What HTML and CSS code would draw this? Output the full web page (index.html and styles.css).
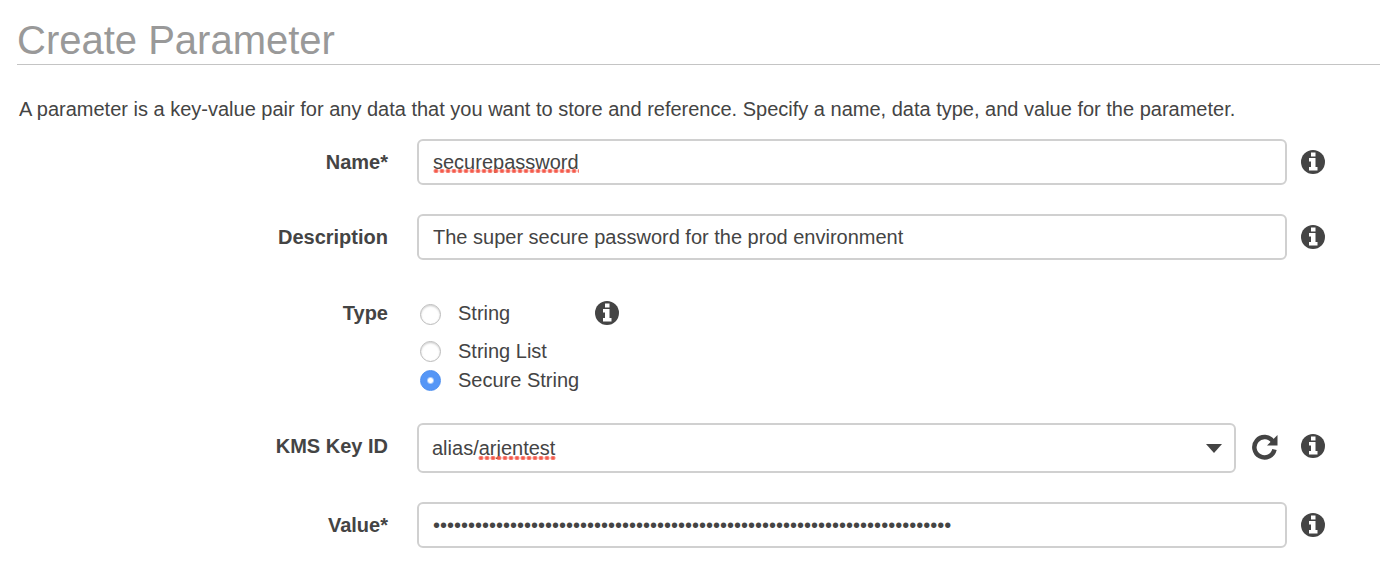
FILE: index.html
```html
<!DOCTYPE html>
<html lang="en">
<head>
<meta charset="utf-8">
<title>Create Parameter</title>
<link rel="stylesheet" href="styles.css">
</head>
<body>
<svg class="sprite" aria-hidden="true">
  <symbol id="info" viewBox="0 0 24 24">
    <circle cx="12" cy="12" r="12" fill="#444"/>
    <path fill="#fff" d="M10 2.500h4.500v4H10zM8 8h6.500v9H16.500v3.500H8V17h2v-5.500H8z"/>
  </symbol>
</svg>
<main class="page">
  <h1 class="title">Create Parameter</h1>
  <p class="intro">A parameter is a key-value pair for any data that you want to store and reference. Specify a name, data type, and value for the parameter.</p>
  <form class="form">
    <div class="row">
      <label class="label" for="name">Name*</label>
      <div class="control">
        <input class="field" id="name" type="text" value="securepassword" spellcheck="false">
        <span class="misspelt misspelt-name"></span>
      </div>
      <button class="icon-button" type="button" aria-label="About name"><svg class="icon"><use href="#info"/></svg></button>
    </div>
    <div class="row">
      <label class="label" for="description">Description</label>
      <div class="control">
        <input class="field" id="description" type="text" value="The super secure password for the prod environment" spellcheck="false">
      </div>
      <button class="icon-button" type="button" aria-label="About description"><svg class="icon"><use href="#info"/></svg></button>
    </div>
    <div class="row row-type" role="radiogroup" aria-labelledby="type-label">
      <span class="label" id="type-label">Type</span>
      <div class="options">
        <div class="option option-first">
          <label class="choice"><input class="radio" type="radio" name="type">String</label>
          <button class="icon-button" type="button" aria-label="About type"><svg class="icon"><use href="#info"/></svg></button>
        </div>
        <div class="option"><label class="choice"><input class="radio" type="radio" name="type">String List</label></div>
        <div class="option"><label class="choice"><input class="radio" type="radio" name="type" checked>Secure String</label></div>
      </div>
    </div>
    <div class="row row-key">
      <label class="label" for="key">KMS Key ID</label>
      <div class="key">
        <div class="control">
          <select class="field select" id="key"><option>alias/arjentest</option></select>
          <span class="misspelt misspelt-key"></span>
          <svg class="caret" viewBox="0 0 16 9" aria-hidden="true"><path fill="#444" d="M0 0h16L8 9z"/></svg>
        </div>
        <button class="icon-button" type="button" aria-label="Refresh keys">
          <svg class="refresh" viewBox="0 0 26 26"><path fill="none" stroke="#444" stroke-width="4.500" d="M22.500 15.500A10.200 10.200 0 1 1 21 7.500"/><path fill="#444" d="M25.500 1v10.500H15z"/></svg>
        </button>
      </div>
      <button class="icon-button" type="button" aria-label="About KMS key ID"><svg class="icon"><use href="#info"/></svg></button>
    </div>
    <div class="row">
      <label class="label" for="value">Value*</label>
      <div class="control">
        <input class="field" id="value" type="password" value="00000000000000000000000000000000000000000000000000000000000000000000000000">
      </div>
      <button class="icon-button" type="button" aria-label="About value"><svg class="icon"><use href="#info"/></svg></button>
    </div>
  </form>
</main>
</body>
</html>
```

FILE: styles.css
```css
* { box-sizing: border-box; }
body {
  margin: 0;
  background: #fff;
  color: #444;
  font: 20px/24px "Liberation Sans", Arial, sans-serif;
}
.sprite { position: absolute; width: 0; height: 0; }
.page { padding: 16px 1px 20px 17px; }
.title {
  margin: 0;
  height: 49px;
  border-bottom: 1px solid #c4c4c4;
  color: #999;
  font-size: 40px;
  font-weight: 400;
  line-height: 48px;
}
.intro { margin: 32px 0 18px 2px; }
.form { display: grid; gap: 29px; padding-right: 55px; }
.row {
  display: grid;
  grid-template-columns: 371px 1fr 24px;
  column-gap: 14px;
  align-items: center;
}
.label { text-align: right; font-weight: 700; }
.control { position: relative; flex: 1; margin-left: 15px; }
.field {
  display: block;
  width: 100%;
  height: 46px;
  padding: 0 14px;
  border: 2px solid #d0d0d0;
  border-radius: 6px;
  background: #fff;
  color: #444;
  font: inherit;
  outline: 0;
}
.select { height: 50px; padding: 0 13px; appearance: none; }
.misspelt {
  position: absolute;
  height: 4px;
  background: radial-gradient(circle, #f45b4c 1px, #f45b4caa 2px, transparent 3px) 0 0 / 6px 4px repeat-x;
}
.misspelt-name { left: 16px; top: 30px; width: 146px; }
.misspelt-key { left: 61px; top: 33px; width: 78px; }
.caret { position: absolute; right: 14px; top: 21px; width: 16px; height: 9px; pointer-events: none; }
.icon-button { display: block; padding: 0; border: 0; background: none; cursor: pointer; }
.icon { display: block; width: 24px; height: 24px; }
.key { display: flex; align-items: start; gap: 16px; padding-right: 9px; }
.row-key { align-items: start; }
.row-key .label, .row-key .icon-button { margin-top: 11px; }
.refresh { display: block; width: 26px; height: 26px; }
.row-type { align-items: start; padding-top: 12px; }
.options { margin-left: 18px; }
.option { display: flex; align-items: center; height: 29px; }
.option-first { height: 24px; margin-bottom: 11px; gap: 85px; }
.choice { display: flex; align-items: center; gap: 17px; }
.radio {
  appearance: none;
  width: 21px;
  height: 21px;
  margin: 2px 0 0;
  border: 1px solid #bbb;
  border-radius: 50%;
  background: #fff;
  box-shadow: inset 0 1px 2px #ccc;
}
.radio:checked {
  border-color: #4a8df0;
  background: radial-gradient(circle, #fff 2px, #5596f6 4px);
  box-shadow: none;
}
```
